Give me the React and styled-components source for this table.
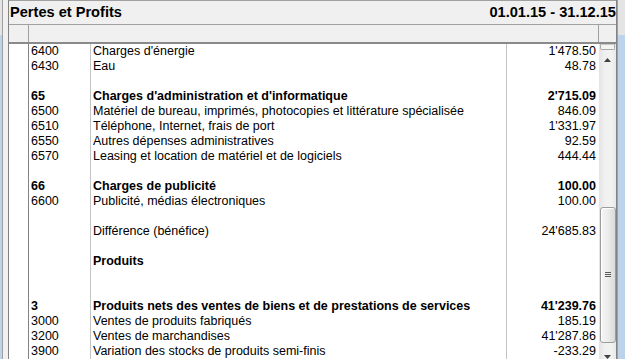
import React from "react";
import styled, { createGlobalStyle } from "styled-components";

const GlobalStyle = createGlobalStyle`
  html, body { margin: 0; padding: 0; background: #f0f0f0; overflow: hidden; }
  * { box-sizing: border-box; }
`;

const rows = [
  { code: "6400", name: "Charges d'énergie", amount: "1'478.50" },
  { code: "6430", name: "Eau", amount: "48.78" },
  {},
  { code: "65", name: "Charges d'administration et d'informatique", amount: "2'715.09", bold: true },
  { code: "6500", name: "Matériel de bureau, imprimés, photocopies et littérature spécialisée", amount: "846.09" },
  { code: "6510", name: "Téléphone, Internet, frais de port", amount: "1'331.97" },
  { code: "6550", name: "Autres dépenses administratives", amount: "92.59" },
  { code: "6570", name: "Leasing et location de matériel et de logiciels", amount: "444.44" },
  {},
  { code: "66", name: "Charges de publicité", amount: "100.00", bold: true },
  { code: "6600", name: "Publicité, médias électroniques", amount: "100.00" },
  {},
  { name: "Différence (bénéfice)", amount: "24'685.83" },
  {},
  { name: "Produits", bold: true },
  {},
  {},
  { code: "3", name: "Produits nets des ventes de biens et de prestations de services", amount: "41'239.76", bold: true },
  { code: "3000", name: "Ventes de produits fabriqués", amount: "185.19" },
  { code: "3200", name: "Ventes de marchandises", amount: "41'287.86" },
  { code: "3900", name: "Variation des stocks de produits semi-finis", amount: "-233.29" },
];

const Screen = styled.div`
  display: flex;
  width: 625px;
  height: 359px;
  font-family: "Liberation Sans", Arial, sans-serif;
  color: #000;
`;

const WindowEdge = styled.div`
  flex: none;
  width: ${(p) => p.$w}px;
  background: linear-gradient(#e4e4e4 0 35px, #bcd3eb 35px);
  border-${(p) => (p.$side === "left" ? "right" : "left")}: 1px solid #a0a0a0;
`;

const Gutter = styled.div`
  flex: none;
  width: 5px;
  background: #f0f0f0;
`;

const Panel = styled.div`
  flex: none;
  width: 609px;
  display: flex;
  flex-direction: column;
  border-left: 1px solid #828282;
  border-right: 1px solid #828282;
  background: #fff;
  overflow: hidden;
`;

const TitleBar = styled.div`
  flex: none;
  height: 24px;
  display: flex;
  justify-content: space-between;
  align-items: center;
  padding: 0 0 0 1px;
  border-top: 1px solid #a0a0a0;
  background: #f0f0f0;
  font-weight: bold;
  font-size: 14.6px;
  line-height: 23px;
`;

const HeaderRow = styled.div`
  flex: none;
  height: 20px;
  display: grid;
  grid-template-columns: 19px 1fr 18px;
  background: #f0f0f0;
  border-top: 1px solid #a0a0a0;
  border-bottom: 2px solid #8a8a8a;
`;

const HeaderCell = styled.div`
  border-left: ${(p) => (p.$sep ? "1px solid #a0a0a0" : "none")};
`;

const Body = styled.div`
  flex: 1;
  display: flex;
  min-height: 0;
`;

const Table = styled.div`
  flex: 1;
  display: flex;
  flex-direction: column;
  font-size: 12.5px;
  line-height: 15px;
`;

const Row = styled.div`
  display: grid;
  grid-template-columns: 19px 62px 416px 92px;
  height: 15px;
  font-weight: ${(p) => (p.$bold ? "bold" : "normal")};
  white-space: nowrap;
`;

const Cell = styled.div`
  overflow: hidden;
  padding: 0 ${(p) => (p.$right ? "2px" : "0")} 0 ${(p) => (p.$right ? "0" : "2px")};
  text-align: ${(p) => (p.$right ? "right" : "left")};
  border-left: ${(p) => (p.$line ? `1px solid ${p.$line}` : "none")};
`;

const Scrollbar = styled.div`
  flex: none;
  width: 17px;
  display: flex;
  flex-direction: column;
  align-items: center;
  overflow: hidden;
  background: linear-gradient(90deg, #e3e3e3, #efefef 30%, #f3f3f3 70%, #e8e8e8);
`;

const TopCap = styled.div`
  flex: none;
  width: 15px;
  height: 6px;
  border: 1px solid #a8a8a8;
  border-top-color: #c8c8c8;
  border-radius: 0 0 2px 2px;
  background: #f4f4f4;
`;

const ArrowBox = styled.div`
  flex: none;
  height: ${(p) => p.$h}px;
  display: flex;
  align-items: ${(p) => (p.$up ? "flex-end" : "flex-start")};
  justify-content: center;
`;

const Track = styled.div`
  flex: none;
  height: ${(p) => p.$h}px;
`;

const Thumb = styled.div`
  flex: none;
  width: 16px;
  height: 136px;
  margin-left: 1px;
  border: 1px solid #9c9c9c;
  border-radius: 3px;
  background: linear-gradient(90deg, #f6f6f6, #ececec 50%, #dadada);
  box-shadow: inset 1px 1px 0 #ffffff;
  display: flex;
  align-items: center;
  justify-content: center;
`;

const Grip = styled.div`
  width: 6px;
  height: 6px;
  background: repeating-linear-gradient(#5a5a5a 0 1px, transparent 1px 2px);
  margin-left: -1px;
`;

const Arrow = ({ up }) => (
  <svg width="7" height="4" viewBox="0 0 7 4">
    <path d={up ? "M0 4 L3.5 0 L7 4 Z" : "M0 0 L3.5 4 L7 0 Z"} fill="#404040" />
  </svg>
);

export default function App() {
  return (
    <>
      <GlobalStyle />
      <Screen>
        <WindowEdge $w={3} $side="left" />
        <Gutter />
        <Panel>
          <TitleBar>
            <span>Pertes et Profits</span>
            <span>01.01.15 - 31.12.15</span>
          </TitleBar>
          <HeaderRow>
            <HeaderCell />
            <HeaderCell $sep />
            <HeaderCell $sep />
          </HeaderRow>
          <Body>
            <Table>
              {rows.map((r, i) => (
                <Row key={i} $bold={r.bold}>
                  <Cell />
                  <Cell $line="#828282">{r.code}</Cell>
                  <Cell $line="#c4c4c4">{r.name}</Cell>
                  <Cell $line="#c4c4c4" $right>{r.amount}</Cell>
                </Row>
              ))}
            </Table>
            <Scrollbar>
              <TopCap />
              <ArrowBox $up $h={12}>
                <Arrow up />
              </ArrowBox>
              <Track $h={145} />
              <Thumb>
                <Grip />
              </Thumb>
              <Track $h={12} />
              <ArrowBox $h={8}>
                <Arrow />
              </ArrowBox>
            </Scrollbar>
          </Body>
        </Panel>
        <WindowEdge $w={8} $side="right" />
      </Screen>
    </>
  );
}
